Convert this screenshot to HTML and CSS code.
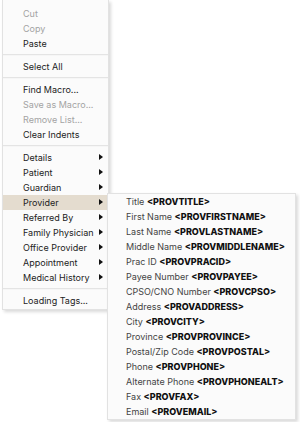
FILE: index.html
```html
<!DOCTYPE html>
<html lang="en">
<head>
    <meta charset="UTF-8">
    <title>Context Menu</title>
    <link rel="stylesheet" href="styles.css">
</head>
<body>
<div class="menu">
    <div class="item disabled">Cut</div>
    <div class="item disabled">Copy</div>
    <div class="item">Paste</div>
    <div class="sep"></div>
    <div class="item">Select All</div>
    <div class="sep"></div>
    <div class="item">Find Macro...</div>
    <div class="item disabled">Save as Macro...</div>
    <div class="item disabled">Remove List...</div>
    <div class="item">Clear Indents</div>
    <div class="sep"></div>
    <div class="item sub">Details</div>
    <div class="item sub">Patient</div>
    <div class="item sub">Guardian</div>
    <div class="item sub active">Provider
        <!-- flyout for the hovered item -->
        <div class="submenu">
            <div class="tag">Title <b>&lt;PROVTITLE&gt;</b></div>
            <div class="tag">First Name <b>&lt;PROVFIRSTNAME&gt;</b></div>
            <div class="tag">Last Name <b>&lt;PROVLASTNAME&gt;</b></div>
            <div class="tag">Middle Name <b>&lt;PROVMIDDLENAME&gt;</b></div>
            <div class="tag">Prac ID <b>&lt;PROVPRACID&gt;</b></div>
            <div class="tag">Payee Number <b>&lt;PROVPAYEE&gt;</b></div>
            <div class="tag">CPSO/CNO Number <b>&lt;PROVCPSO&gt;</b></div>
            <div class="tag">Address <b>&lt;PROVADDRESS&gt;</b></div>
            <div class="tag">City <b>&lt;PROVCITY&gt;</b></div>
            <div class="tag">Province <b>&lt;PROVPROVINCE&gt;</b></div>
            <div class="tag">Postal/Zip Code <b>&lt;PROVPOSTAL&gt;</b></div>
            <div class="tag">Phone <b>&lt;PROVPHONE&gt;</b></div>
            <div class="tag">Alternate Phone <b>&lt;PROVPHONEALT&gt;</b></div>
            <div class="tag">Fax <b>&lt;PROVFAX&gt;</b></div>
            <div class="tag">Email <b>&lt;PROVEMAIL&gt;</b></div>
        </div>
    </div>
    <div class="item sub">Referred By</div>
    <div class="item sub">Family Physician</div>
    <div class="item sub">Office Provider</div>
    <div class="item sub">Appointment</div>
    <div class="item sub">Medical History</div>
    <div class="sep"></div>
    <div class="item">Loading Tags...</div>
</div>
</body>
</html>
```

FILE: styles.css
```css
html, body {
    height: 100%;
}
body {
    margin: 0;
    min-height: 422px;
    background-color: #ffffff;
    font-family: Inter, "Noto Sans", sans-serif;
    font-size: 9px;
    color: #222;
}
.menu {
    width: 105px;
    margin-left: 2px;
    padding: 6px 0 1px 0;
    background-color: #fbfbfb;
    border: 1px solid #e2e2e2;
    border-top: none;
    box-shadow: 2px 2px 3px rgba(0, 0, 0, 0.15);
    display: flex;
    flex-direction: column;
}
.item {
    position: relative;
    height: 15px;
    line-height: 15px;
    padding-left: 20px;
    white-space: nowrap;
}
.item.disabled {
    color: #a3a3a3;
}
.item.sub::after {
    content: "";
    position: absolute;
    right: 5px;
    top: 4px;
    border-left: 4px solid #111;
    border-top: 3px solid transparent;
    border-bottom: 3px solid transparent;
}
.item.active {
    background-color: #e4dccf;
}
.sep {
    height: 1px;
    margin: 3px 0;
    background-color: #e4e4e4;
    border-bottom: 1px solid #f6f6f6;
}
.submenu {
    position: absolute;
    left: 104px;
    top: -2px;
    width: 187px;
    padding: 0;
    background-color: #fbfbfb;
    border: 1px solid #e2e2e2;
    box-shadow: 2px 2px 3px rgba(0, 0, 0, 0.15);
    z-index: 2;
}
.tag {
    height: 15px;
    line-height: 15px;
    padding-left: 18px;
    color: #444;
}
.tag b {
    color: #111;
    font-weight: 800;
}
```
